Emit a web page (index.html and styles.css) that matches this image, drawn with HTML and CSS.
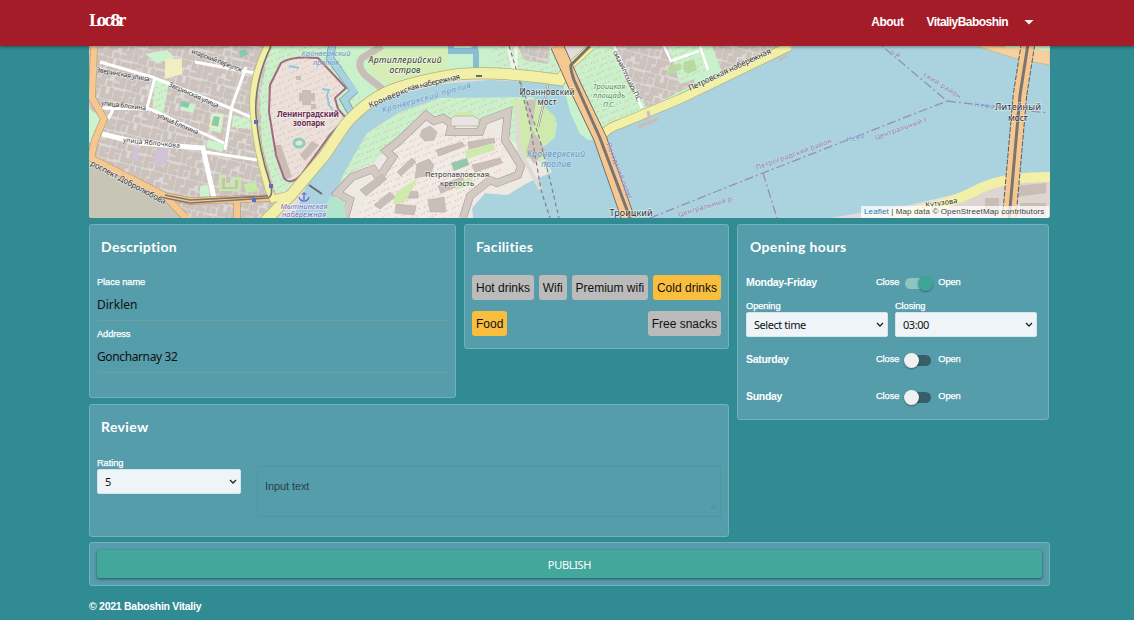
FILE: index.html
```html
<!DOCTYPE html>
<html lang="en">
<head>
<meta charset="utf-8">
<title>Loc8r</title>
<link rel="stylesheet" href="styles.css">
</head>
<body>
<header class="navbar">
  <div class="wrap navbar-inner">
    <a class="logo">Loc8r</a>
    <nav class="nav">
      <a class="nav-about">About</a>
      <a class="nav-user">VitaliyBaboshin</a>
      <svg class="caret" width="10" height="5" viewBox="0 0 10 5"><path d="M0.5 0h9L5 4.6z" fill="#fff"/></svg>
    </nav>
  </div>
</header>
<main class="wrap">
  <div class="map">
    <svg class="map-canvas" viewBox="89 46 961 172" width="961" height="172">
      <defs>
        <pattern id="blocks" width="42" height="34" patternUnits="userSpaceOnUse" patternTransform="rotate(14) scale(.85)">
          <rect width="42" height="34" fill="#dedad8"/>
          <g fill="#cdc2bc" stroke="#beb1ab" stroke-width=".5">
            <path d="M1 1h12v4H6v9H1zM15 1h5v8h5V1h4v13H15zM31 2h10v5h-4v7h-6zM1 17h9v6H6v9H1zM12 16h14v4h-4v4h-5v9h-5zM28 16h5v6h3v-6h5v16H28v-4h7v-3h-7zM8 26h3v7H8zM8 7h4v6H8zM20 27h6v6h-6zM38 9h3v5h-3z"/>
          </g>
        </pattern>
        <pattern id="dots" width="9" height="8" patternUnits="userSpaceOnUse" patternTransform="rotate(20)">
          <path d="M1 1h1.200M5.500 4.500h1.200M3 7h1" stroke="#f09a96" stroke-width="1"/>
        </pattern>
      </defs>
      <rect x="89" y="46" width="961" height="172" fill="#e2dedc"/>
      <rect x="89" y="46" width="190" height="172" fill="url(#blocks)"/>
      <!-- courtyards and gardens -->
      <g fill="#cdf2ce">
        <path d="M89 108l14 12-12 22h-2zM155 78l14 3-6 35-11-4zM233 115l22 5-1 10-22-3zM208 140l17 3-3 9-16-5zM200 186l8-1 2 13-10 1zM145 54l22-4 8 8-18 5zM182 102l14 2-3 9-13-3zM213 113l11 1-3 19-12-3z"/>
      </g>
      <path d="M155 78l14 3-6 35-11-4zM233 115l22 5-1 10-22-3z" fill="url(#dots)"/>
      <path d="M219 175h7v8h7v-6h8v14h-22zM244 184l12-2 2 9-12 2z" fill="#c3eaa6"/>
      <path d="M222 178h3v9h10v-7h3v9h-16z" fill="#cabfb8"/>
      <path d="M165 59h17v15l-17 5z" fill="#f3edc2"/>
      <path d="M155 150l14-4-3 20-12-1zM134 146l6 2-3 14-6-2z" fill="#d1c3d5"/>
      <path d="M213 115l8 1-2 12-9-2z" fill="#85cbb0" stroke="#f2edc1" stroke-width="2"/>
      <path d="M181 101l9 2-2 5-8-2zM239 51l7-2 2 5-7 4z" fill="#86c9b0"/>
      <path d="M89 164L135 185L170 203L183 218H89z" fill="#c6c5b6"/>
      <!-- zoo park greenery -->
      <path d="M270 46H375L372 90L345 125L300 188L276 194L262 145L260 95z" fill="#c9f1cb"/>
      <path d="M270 46H375L372 90L345 125L300 188L276 194L262 145L260 95z" fill="url(#dots)"/>
      <path d="M281 63L296 58L318 58L344 88L334 99L345 118L330 132L300 178L285 181L275 155L268 112L270 85z" fill="#eae1db"/>
      <path d="M281 63L296 58L318 58L344 88L334 99L345 118L330 132L300 178L285 181L275 155L268 112L270 85z" fill="url(#dots)"/>
      <g fill="#cbbdb5"><path d="M302 90h9v3h4v8h-4v4h-9v-4h-3v-8h3zM274 145h7l11 32-7 3zM300 155l12-14 7 4-14 16zM311 104h5v5h-5zM296 76h5v4h-5z"/></g>
      <g fill="none" stroke="#8ec7e0" stroke-width="2"><path d="M322 89l7 1-2 5 2 10 4 5M289 66l10 2"/></g>
      <ellipse cx="299" cy="143" rx="5" ry="4" fill="none" stroke="#8ed1b8" stroke-width="3"/>
      <path d="M281 63Q290 56 318 58L346 88L335 98L338 109L346 118L330 135L301 175Q290 186 284 178L276 155L269 112L270 85z" fill="none" stroke="#9c5d79" stroke-width="2" stroke-opacity=".9"/>
      <path d="M332 46L330 58L354 91L344 100L352 114" fill="none" stroke="#769ba4" stroke-width="8"/>
      <path d="M332 46L330 58L354 91L344 100L352 114" fill="none" stroke="#a9d2e0" stroke-width="6.5"/>
      <!-- north shore -->
      <path d="M340 46H490L530 46L555 76L460 74L400 87L366 108L357 90L342 68z" fill="#c9f1cb"/>
      <path d="M378 46L363 58Q357 65 366 76L388 93L460 76L462 46z" fill="#c9f1cb"/>
      <path d="M380 50L366 60L372 75L392 86L445 73L448 48z" fill="#d6edb6"/>
      <path d="M382 46L362 58Q356 66 366 76L385 91" fill="none" stroke="#c8bdb7" stroke-width="7"/>
      <path d="M451 46v5h24M474 46l2 6v18" fill="none" stroke="#89bed2" stroke-width="6"/>
      <path d="M490 46h62l12 24-12 9-54-10z" fill="#c9f1cb"/><path d="M490 46h62l12 24-12 9-54-10z" fill="url(#dots)"/>
      <path d="M518 46h32l-2 18-24-4z" fill="url(#blocks)"/>
      <path d="M516 46v30M508 46l8 34" stroke="#f6f3ef" stroke-width="3"/>
      <!-- Troitskaya square and Petrovskaya embankment -->
      <path d="M575 68L596 46H793L720 76L608 128L600 130z" fill="#c9f1cb"/>
      <path d="M575 68L596 46H640L650 110L608 128L600 130z" fill="url(#dots)"/>
      <path d="M612 46H690L695 84L647 108z" fill="url(#blocks)"/>
      <path d="M668 46H708L706 75L680 84z" fill="#c9f1cb"/><path d="M668 46H708L706 75L680 84z" fill="url(#dots)"/>
      <path d="M712 46H785L722 72z" fill="url(#blocks)"/>
      <path d="M684 62l10-3 3 11-9 4-5-5zM668 67l12-4 2 6-13 6z" fill="#b8d9a0"/>
      <path d="M614 46L642 108M664 46l7 15 28-10M700 46l8 24" stroke="#fff" stroke-width="2.5" fill="none"/>
      <!-- Neva -->
      <path d="M293 218L310 178L337 133L362 107L400 94L440 84L490 80L546 83L567 90L577 123L587 140L600 140L608 133L660 108L730 74L793 46H977L1017 58L1050 65V172L1017 175L973 190L910 205L860 213L830 218H473L325 218z" fill="#aad3df"/>
      <path d="M546 84L567 90L573 118L584 139L595 142L604 139L570 82z" fill="#aad3df"/>
      <path d="M563 84L570 112L580 134L588 140L599 140L572 82z" fill="#c9f1cb"/>
      <!-- fortress island -->
      <path d="M325 218L343 175L367 133L400 112L440 98L533 97L545 112L557 123L555 137L540 150L552 172L527 183L507 195L485 193L472 208L473 218z" fill="#c9f1cb"/>
      <path d="M325 218L343 175L367 133L400 112L440 98L533 97L545 112L557 123L555 137L540 150L552 172L527 183L507 195L485 193L472 208L473 218z" fill="url(#dots)"/>
      <path d="M333 193L350 173L373 163L400 137L427 112L450 120L478 128L510 112L508 137L552 172L527 183L507 195L485 193L472 208L473 218H345z" fill="#eee9e3"/>
      <path d="M512 100h26l18 18-1 18-15 12 4 12-22-2z" fill="#cfeaad"/>
      <path d="M536 100l-4 30 14 20-12 14-8-12 6-20-8-32z" fill="#cdc2ba"/>
      <path d="M388 150L410 128L428 147L447 130L500 137L506 168L470 190L453 218H355L375 185z" fill="#f0ebe5"/>
      <path d="M388 150L410 128L428 147L447 130L500 137L506 168L470 190L453 218H355L375 185z" fill="url(#dots)"/>
      <path d="M345 218L350 200L337 193L352 177L373 169L379 178L393 157L386 151L400 140L426 115L434 121L443 118L452 124L450 132L480 132L484 121L508 112L505 140L521 166L518 175L497 183L490 180L470 196L463 218" fill="none" stroke="#a89b95" stroke-width="8"/>
      <path d="M345 218L350 200L337 193L352 177L373 169L379 178L393 157L386 151L400 140L426 115L434 121L443 118L452 124L450 132L480 132L484 121L508 112L505 140L521 166L518 175L497 183L490 180L470 196L463 218" fill="none" stroke="#d3cac4" stroke-width="6.8"/>
      <g fill="#cabfb8" stroke="#b4a7a0" stroke-width=".5">
        <path d="M422 130l8-4 7 6-3 8-9 1-5-5zM397 172l15-14 4 4-15 14zM360 190l22-16 5 5-21 17zM374 205l16-13 5 5-15 12zM400 190l18 2v6h-18zM417 164l12-5 5 6-4 10-15 3zM436 150l26-8 3 4-26 10zM468 142l26-4 1 5-26 6zM472 165l28-7 2 5-27 9zM438 186l24-9 3 6-24 10zM428 200l16-3 2 15h-16zM396 204l20 2-2 9-19-2z"/>
      </g>
      <path d="M451 163l16-5 2 7-15 6z" fill="#95c8ab"/>
      <path d="M465 151l28-8 2 7-28 9zM455 184l18-8-2 9-15 5zM418 178l-22 14-3 12 12-2z" fill="#cfeaad"/>
      <path d="M454 116h19l6 3v7h-28v-7z" fill="#e8e5e1" stroke="#b4a7a0" stroke-width=".7"/>
      <path d="M455 112h19v3h-19z" fill="#cfeaad"/>
      <path d="M517 104l2 46 22 40" fill="none" stroke="#dedad4" stroke-width="4"/>
      <path d="M330 196l14 5 2 17h-19l-3-8z" fill="#b1e5cd"/>
      <!-- tunnels -->
      <path d="M509 46L518 75L530 125L541 190L550 218M518 75L540 140L550 180L559 218" fill="none" stroke="#76848a" stroke-width="1.2" stroke-dasharray="4 3"/>
      <!-- small streets -->
      <g fill="none" stroke="#fff" stroke-width="3">
        <path d="M100 62L152 77L230 108L257 120M155 77L147 108M100 108L150 109L224 143M246 67L232 106L225 150M195 62L255 73M205 152L257 160M108 119L113 110"/>
        <path d="M102 134L140 143L203 148L214 198" stroke-width="5"/>
      </g>
      <!-- main roads -->
      <g fill="none" stroke="#bf9a68" stroke-width="7.500">
        <path d="M94 46L92 98L104 119L95 140L91 158L165 196L190 201L272 198M165 196L186 218M237 200v18"/>
      </g>
      <g fill="none" stroke="#f5c891" stroke-width="6.2">
        <path d="M94 46L92 98L104 119L95 140L91 158L165 196L190 201L272 198M165 196L190 222M237 200v18"/>
      </g>
      <path d="M268 46Q250 82 254 115Q257 150 269 190L273 199L292 194M592 46L570 66" fill="none" stroke="#b8b77a" stroke-width="8"/>
      <path d="M264 222L292 194L325 155L345 125Q370 96 400 87T460 74Q500 71 560 80L566 72" fill="none" stroke="#b1b07a" stroke-width="12"/>
      <path d="M268 46Q250 82 254 115Q257 150 269 190L273 199L292 194M592 46L570 66" fill="none" stroke="#f2efa7" stroke-width="6.5"/>
      <path d="M264 222L292 194L325 155L345 125Q370 96 400 87T460 74Q500 71 560 80L566 72" fill="none" stroke="#f2efa7" stroke-width="10.5"/>
      <path d="M602 138Q604 129 620 124L680 99L790 46" fill="none" stroke="#b1b07a" stroke-width="10"/>
      <path d="M602 138Q604 129 620 124L680 99L790 46" fill="none" stroke="#f2efa7" stroke-width="8.5"/>
      <path d="M896 214Q940 206 973 191Q1010 180 1050 181V218H880z" fill="#ddd5cf"/>
      <path d="M1016 186l30-3v10l-30 4zM985 198h14v18h-14zM1020 203h26v14h-26z" fill="#c9beb7"/>
      <path d="M890 216Q940 208 973 192Q1000 176 1054 177" fill="none" stroke="#f2efa7" stroke-width="10"/>
      <path d="M970 44L1050 50V65L1017 59z" fill="#f6d19f" stroke="#c9b07e" stroke-width=".7"/>
      <path d="M1005 46L1050 49" stroke="#c9f1cb" stroke-width="3"/>
      <path d="M557 46L574 84L600 138L628 218" fill="none" stroke="#5d5b59" stroke-width="13.500"/>
      <path d="M557 46L574 84L600 138L628 218" fill="none" stroke="#f5c891" stroke-width="12"/>
      <path d="M1028 44L1020 95L1009 220" fill="none" stroke="#5d5b59" stroke-width="14.500" stroke-dasharray="5 1.500"/>
      <path d="M1028 44L1020 95L1009 220" fill="none" stroke="#f5c891" stroke-width="12.500"/>
      <g fill="none" stroke="#7b7471">
        <path d="M590 46L571 65Q570 68 574 80L600 138L630 218" stroke-width="3"/>
        <path d="M1028 44L1020 95L1009 220" stroke-width="3"/>
        <path d="M271 46Q254 82 256 115Q259 150 270 183Q274 195 268 198L190 203L160 197M268 196L190 200L165 195" stroke-width="1.6"/>
      </g>
      <path d="M649 116l-1-5M644 120l6-3M638 127l20-8M779 60l8-4" stroke="#c9bdb6" stroke-width="3"/>
      <path d="M309 185l13 9M476 76h6M548 85l-10 42" stroke="#6b6669" stroke-width="2"/>
      <path d="M548 85l-10 42" stroke="#eee8e4" stroke-width="1.2"/>
      <g fill="#5b6ebd"><path d="M254 120h4v4h-4zM269 184h4v4h-4zM252 198h4v4h-4z"/></g>
      <!-- district boundaries -->
      <g fill="none" stroke="#9a8db5" stroke-width="1.3" stroke-dasharray="9 3 2 3">
        <path d="M650 218L720 190L763 173L947 101L882 46M947 101L1048 113M763 173L777 218"/>
      </g>
      <!-- labels -->
      <g class="lbl" font-size="6.8">
        <text transform="translate(191 53) rotate(21)" textLength="54">итарский переулок</text>
        <text transform="translate(96 72) rotate(10)" textLength="54">Зверинская улица</text>
        <text transform="translate(168 86) rotate(24)" textLength="54">Зверинская улица</text>
        <text transform="translate(101 105) rotate(7)" textLength="45">улица Блохина</text>
        <text transform="translate(157 117) rotate(24)" textLength="44">улица Блохина</text>
        <text transform="translate(123 142) rotate(6)" textLength="57">улица Яблочкова</text>
        <text font-size="8" transform="translate(90 165) rotate(28)" textLength="84">роспект Добролюбова</text>
        <text font-size="8" transform="translate(370 108) rotate(-23)" textLength="42">Кронверкс</text>
        <text font-size="8" transform="translate(408 91) rotate(-13)" textLength="54">кая набережная</text>
        <text font-size="8" transform="translate(690 91) rotate(-25)" textLength="90">Петровская набережная</text>
        <text transform="translate(613 52) rotate(64)" textLength="56">оицкая площадь П.С.</text>
        <text font-size="7.5" transform="translate(922 208) rotate(-8)" textLength="36">. Кутузова</text>
      </g>
      <g class="lbl place" font-size="8">
        <text x="308" y="117" class="zoo" textLength="62">Ленинградский</text>
        <text x="309" y="126" class="zoo" textLength="32">зоопарк</text>
        <text x="405" y="63" class="ital" font-size="8.5" textLength="73">Артиллерийский</text>
        <text x="405" y="73" class="ital" font-size="8.5" textLength="31">остров</text>
        <text x="547" y="95" textLength="55">Иоанновский</text>
        <text x="547" y="105" textLength="19">мост</text>
        <text x="457" y="177" font-size="7.5" textLength="64">Петропавловская</text>
        <text x="457" y="186" font-size="7.5" textLength="34">крепость</text>
        <text x="631" y="216" font-size="9" textLength="43">Троицкий</text>
        <text x="1018" y="110" font-size="9" textLength="46">Литейный</text>
        <text x="1018" y="121" font-size="9" textLength="20">мост</text>
      </g>
      <g class="lbl place water" font-size="7.5">
        <text x="326" y="56" textLength="49">Кронверкский</text>
        <text x="326" y="65" textLength="26">проток</text>
        <text x="556" y="157" font-size="8.5" textLength="58">Кронверкский</text>
        <text x="556" y="167" font-size="8.5" textLength="30">пролив</text>
        <text font-size="8" transform="translate(427 100) rotate(-16)" textLength="92">Кронверкский пролив</text>
        <text transform="translate(856 140) rotate(-14)" textLength="19">Нева</text>
        <text transform="translate(984 108) rotate(6)" textLength="20">Нева</text>
      </g>
      <g class="lbl place harbor" font-size="7.5">
        <text x="304" y="209" textLength="47">Мытнинская</text>
        <text x="304" y="217" textLength="44">набережная</text>
      </g>
      <path d="M304 192v8M301.500 194h5M299 197q1 4 5 4t5-4" fill="none" stroke="#6d67c4" stroke-width="1.200"/>
      <g class="lbl place square" font-size="7.5">
        <text x="609" y="89" textLength="32">Троицкая</text>
        <text x="609" y="98" textLength="32">площадь</text>
        <text x="609" y="107" textLength="12">П.С.</text>
      </g>
      <g class="lbl district" font-size="7">
        <text transform="translate(757 170) rotate(-20)" textLength="80">Петроградский район</text>
        <text transform="translate(876 140) rotate(-20)" textLength="55">Центральный г</text>
        <text transform="translate(679 217) rotate(-17)" textLength="58">Центральный р:</text>
        <text transform="translate(923 76) rotate(32)" textLength="43">ский район</text>
        <text transform="translate(890 53) rotate(30)" textLength="10">ой</text>
        <text transform="translate(606 144) rotate(68)" textLength="60">Посадский округ</text>
      </g>
    </svg>
    <div class="attribution"><a>Leaflet</a> | Map data © OpenStreetMap contributors</div>
  </div>

  <div class="board">
    <div class="left">
      <section class="panel description">
        <h2>Description</h2>
        <label class="small">Place name</label>
        <div class="field">Dirklen</div>
        <label class="small">Address</label>
        <div class="field address">Goncharnay 32</div>
      </section>
      <section class="panel facilities">
        <h2>Facilities</h2>
        <div class="tags">
          <span class="tag">Hot drinks</span><span class="tag">Wifi</span><span class="tag">Premium wifi</span><span class="tag on">Cold drinks</span>
        </div>
        <div class="tags">
          <span class="tag on">Food</span><span class="tag">Free snacks</span>
        </div>
      </section>
      <section class="panel review">
        <h2>Review</h2>
        <div class="review-row">
          <div class="rating">
            <label class="small">Rating</label>
            <div class="select"><span>5</span><svg width="8" height="6" viewBox="0 0 8 6"><path d="M1 1l3 3 3-3"/></svg></div>
          </div>
          <div class="textarea">Input text<svg class="grip" width="6" height="6" viewBox="0 0 6 6"><path d="M1 5l4-4M4 5l1-1" stroke="#3f7f8c" stroke-width=".8"/></svg></div>
        </div>
      </section>
    </div>
    <section class="panel hours">
      <h2>Opening hours</h2>
      <div class="day"><b>Monday-Friday</b><span class="small">Close</span><i class="switch checked"></i><span class="small">Open</span></div>
      <div class="times">
        <div><label class="small">Opening</label>
          <div class="select"><span>Select time</span><svg width="8" height="6" viewBox="0 0 8 6"><path d="M1 1l3 3 3-3"/></svg></div></div>
        <div><label class="small">Closing</label>
          <div class="select"><span>03:00</span><svg width="8" height="6" viewBox="0 0 8 6"><path d="M1 1l3 3 3-3"/></svg></div></div>
      </div>
      <div class="day sat"><b>Saturday</b><span class="small">Close</span><i class="switch"></i><span class="small">Open</span></div>
      <div class="day sun"><b>Sunday</b><span class="small">Close</span><i class="switch"></i><span class="small">Open</span></div>
    </section>
  </div>
  <section class="panel publish"><button class="btn">PUBLISH</button></section>
  <footer class="footer">© 2021 Baboshin Vitaliy</footer>
</main>
</body>
</html>
```
FILE: styles.css
```css
* { box-sizing: border-box; }
body {
  margin: 0;
  height: 620px;
  overflow: hidden;
  background: #318b93;
  color: #fff;
  font-family: "Liberation Sans", Arial, sans-serif;
}
.wrap { width: 961px; margin-left: 89px; }
.navbar {
  position: relative;
  z-index: 2;
  height: 46px;
  background: #a51c29;
  box-shadow: 0 1px 3px rgba(0, 0, 0, .4);
}
.navbar-inner { display: flex; justify-content: space-between; height: 44px; align-items: center; }
.logo {
  font: bold 16px/20px "DejaVu Serif Condensed", "DejaVu Serif", serif;
  letter-spacing: -2.3px;
  padding-bottom: 3px;
}
.nav { display: flex; align-items: center; margin-right: 16px; font-size: 12px; font-weight: bold; line-height: 16px; }
.nav-about { margin-right: 23px; letter-spacing: -.5px; }
.nav-user { margin-right: 16px; letter-spacing: -.55px; }

.map { position: relative; height: 172px; border-radius: 0 0 3px 3px; overflow: hidden; }
.map-canvas { display: block; }
.lbl { font-family: "Noto Sans", sans-serif; fill: #333; stroke: rgba(255, 255, 255, .55); stroke-width: 1.4px; paint-order: stroke; }
.place { text-anchor: middle; }
.ital { font-style: italic; }
.zoo { fill: #6d2e55; font-weight: bold; }
.water { fill: #6a97c9; font-style: italic; stroke-opacity: .4; }
.water text[transform] { text-anchor: middle; }
.harbor { fill: #7a68bd; font-style: italic; }
.square { fill: #4a9155; font-style: italic; }
.district { fill: #9d7dad; stroke-opacity: .3; }
.attribution {
  position: absolute;
  right: 1px;
  bottom: 0;
  height: 12px;
  width: 188px;
  padding-left: 3px;
  background: rgba(255, 255, 255, .75);
  color: #444;
  font-size: 8px;
  line-height: 12px;
  white-space: nowrap;
  letter-spacing: .12px;
}
.attribution a { color: #1879a8; }

.board { display: grid; grid-template-columns: 640px 312px; column-gap: 8px; margin-top: 6px; align-items: start; }
.left { display: grid; grid-template-columns: 367px 265px; gap: 6px 8px; align-items: start; }
.panel { background: #569dab; border: 1px solid #73b2bc; border-radius: 3px; padding: 0 7px; }
.panel h2 {
  margin: 12px 0 0 4px;
  font: 700 14px/20px Lato, sans-serif;
  letter-spacing: .35px;
}
.small { display: block; font-size: 9.3px; line-height: 12px; letter-spacing: -.1px; -webkit-text-stroke: .25px #fff; white-space: nowrap; }

.description { height: 174px; }
.description h2 { margin-bottom: 19px; }
.field {
  height: 33px;
  margin-bottom: 7px;
  padding-top: 8px;
  border-bottom: 1px solid #6e9f9f;
  color: #111;
  font: 12px/18px "Noto Sans", sans-serif;
}
.address { letter-spacing: -.38px; }
.facilities { height: 125px; }
.facilities h2 { margin-bottom: 18px; }
.tags { display: flex; justify-content: space-between; margin-bottom: 11px; }
.tag { height: 25px; padding: 0 4px; border-radius: 3px; background: #bbb; color: #111; font-size: 12px; line-height: 26px; white-space: nowrap; }
.tag.on { background: #f9be3d; }

.review { grid-column: 1 / 3; height: 133px; }
.review h2 { margin-bottom: 20px; }
.review-row { display: flex; gap: 16px; }
.rating { width: 144px; }
.select {
  display: flex;
  align-items: center;
  justify-content: space-between;
  height: 25px;
  padding: 0 3px 0 7px;
  background: #eef4f7;
  border: 1px solid #d5e5ea;
  border-radius: 2px;
  color: #111;
  font: 11px/20px "Noto Sans", sans-serif;
  letter-spacing: -.45px;
}
.select svg { fill: none; stroke: #222; stroke-width: 1.3; }
.textarea {
  position: relative;
  width: 464px;
  height: 51px;
  margin-top: 9px;
  padding: 12px 7px;
  border: 1px solid #5096a2;
  color: #2b3f46;
  font-size: 11px;
  line-height: 14px;
  letter-spacing: -.1px;
}
.grip { position: absolute; right: 4px; bottom: 6px; }

.hours { height: 196px; padding: 0 12px 0 8px; }
.day { display: flex; align-items: center; height: 16px; font-size: 10.5px; letter-spacing: -.3px; }
.hours h2 { margin-bottom: 17px; }
.day b { width: 130px; }
.switch { position: relative; width: 26px; height: 11px; margin: 3px 7px 0 6px; border-radius: 6px; background: #365f68; }
.switch::after {
  content: "";
  position: absolute;
  left: -1px;
  top: -2px;
  width: 15px;
  height: 15px;
  border-radius: 50%;
  background: #f1f1f1;
  box-shadow: 0 1px 2px rgba(0, 0, 0, .35);
}
.switch.checked { background: #8bc5c0; }
.switch.checked::after { left: 13px; background: #3fa597; }
.times { display: grid; grid-template-columns: 142px 142px; gap: 7px; margin: 10px 0 14px; }
.sun { margin-top: 21px; }

.publish { height: 44px; margin-top: 5px; padding: 7px; }
.btn {
  display: block;
  width: 945px;
  height: 28px;
  border: 0;
  padding: 2px 0 0;
  border-radius: 2px;
  background: #43a79c;
  color: #fff;
  font: 11px/20px "Noto Sans", sans-serif;
  letter-spacing: -.3px;
  box-shadow: 0 1px 3px rgba(20, 60, 70, .8);
}
.footer { margin-top: 13px; font-size: 10.5px; font-weight: bold; line-height: 14px; letter-spacing: -.27px; }
```
